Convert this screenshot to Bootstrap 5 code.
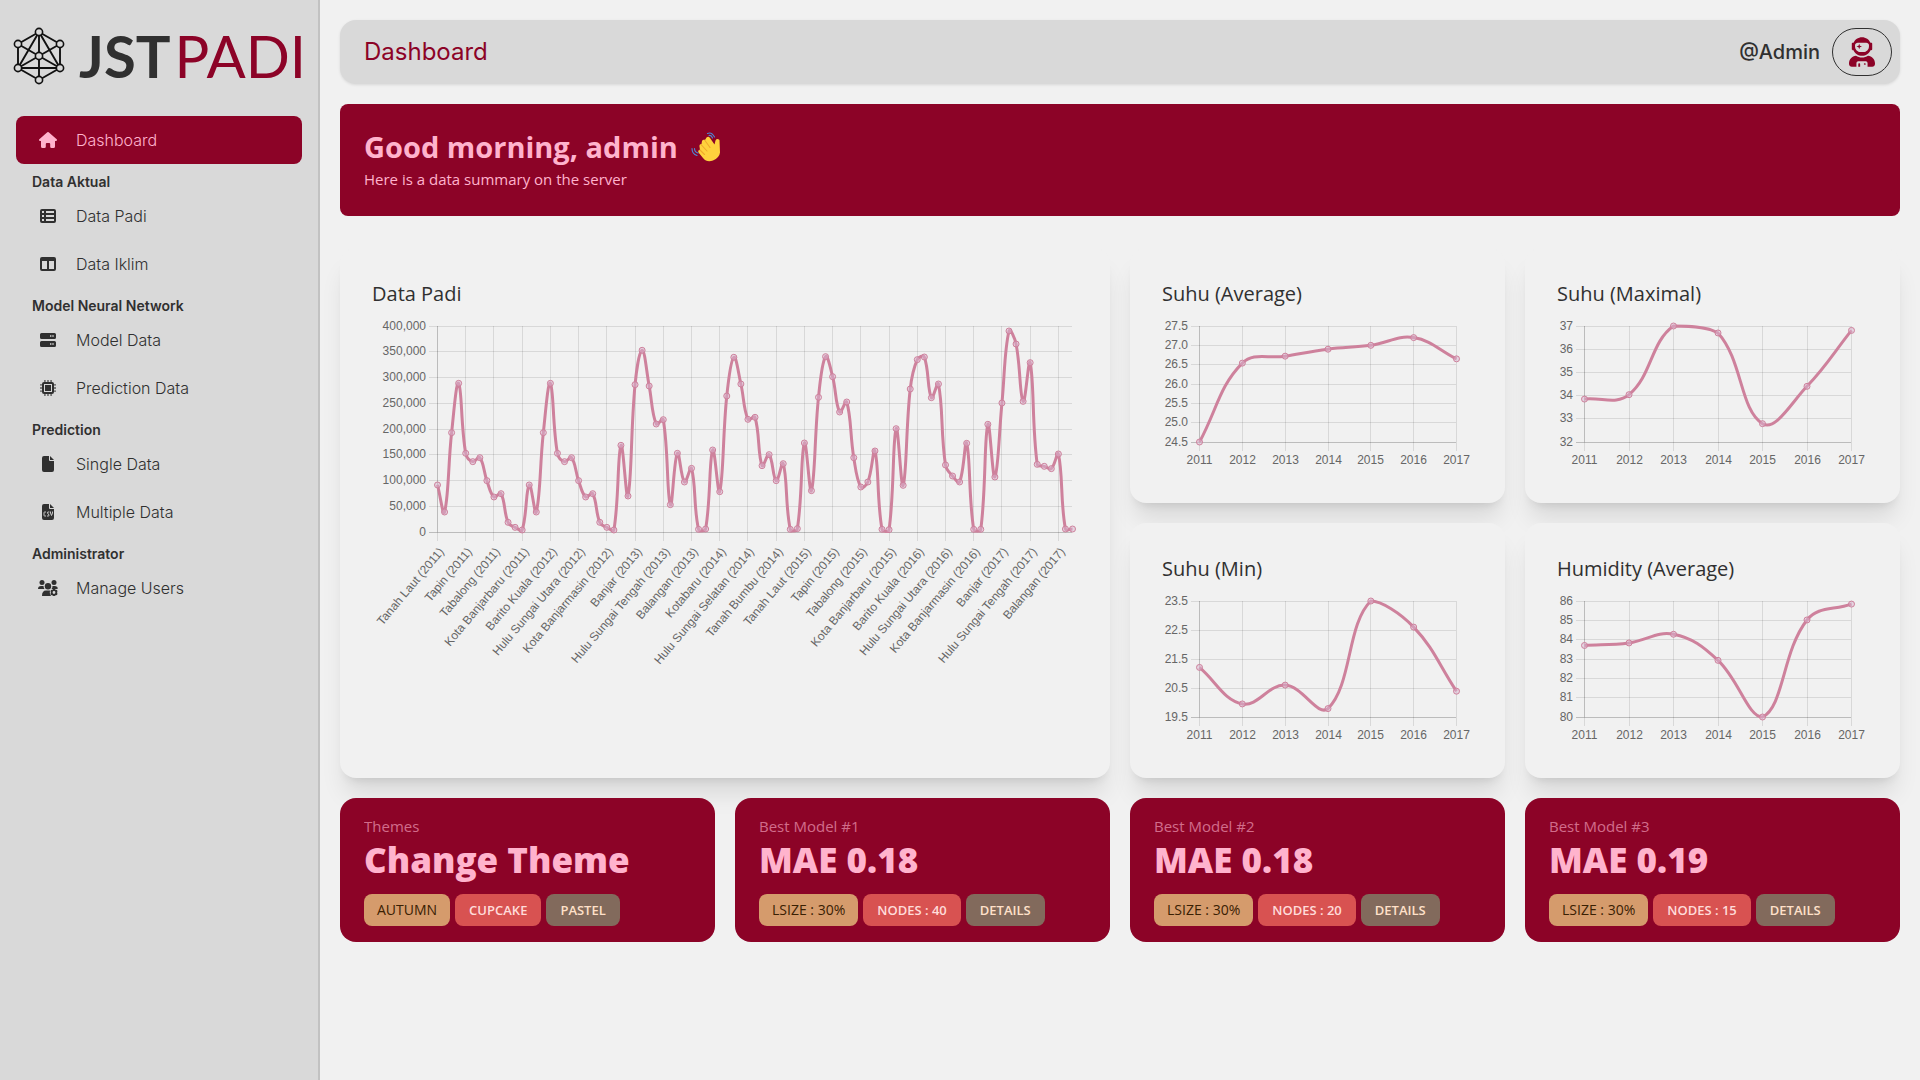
<!DOCTYPE html>
<html lang="id">
<head>
<meta charset="utf-8">
<meta name="viewport" content="width=device-width, initial-scale=1">
<title>JSTPADI - Dashboard</title>
<link href="https://cdn.jsdelivr.net/npm/bootstrap@5.3.0/dist/css/bootstrap.min.css" rel="stylesheet">
<style>
:root{--primary:#8c0327;--primary-text:#ffb3cd;--base:#f1f1f1;--base-2:#d9d9d9;--ink:#303030}
body{background:var(--base);color:var(--ink);font-family:"Open Sans","Noto Sans",sans-serif;font-size:16px;line-height:24px}
.side{width:320px;flex:none;background:var(--base-2);border-right:2px solid #c2c2c2;font-family:Inter,sans-serif}
.brand{padding:20px 12px 0;height:116px;gap:13px;color:#303030;text-decoration:none}
.brand-name{font-family:Lato,sans-serif;font-size:58px;line-height:72px;font-weight:700}
.brand-name span{color:var(--primary);font-weight:400;margin-left:4px}
.side-nav{padding:0 16px}
.side-item{height:48px;padding:0 16px;gap:12px;border-radius:8px;color:var(--ink);font-weight:300;text-decoration:none}
.side-item svg{width:32px;height:16px;fill:currentColor}
.side-item.active{background:var(--primary);color:var(--primary-text)}
.side-head{font-size:14px;line-height:20px;font-weight:600;margin:8px 0 0 16px}
.main{padding:20px;min-width:0}
.topbar{background:var(--base-2);border-radius:16px;padding:8px 8px 8px 24px;box-shadow:0 1px 3px rgba(0,0,0,.1);font-family:Inter,sans-serif}
.topbar h1{font-size:24px;line-height:32px;font-weight:400;color:var(--primary)}
.who{font-size:20px;font-weight:500}
.avatar{width:60px;height:48px;border:1px solid var(--ink);border-radius:24px;background:none;color:var(--primary)}
.hero{background:var(--primary);color:var(--primary-text);border-radius:8px;padding:23px 24px 24px;margin:20px 0 32px;height:112px}
.hero h2{font-size:29px;line-height:40px;font-weight:700;gap:13px}
.hero p{font-size:15px}
.tiles{--bs-gutter-x:20px;--bs-gutter-y:20px}
.panel{background:var(--base);border-radius:16px;padding:32px;box-shadow:0 20px 25px -5px rgba(0,0,0,.1),0 8px 10px -6px rgba(0,0,0,.1)}
.panel h3{font-size:20px;line-height:28px;font-weight:500;margin-bottom:8px}
.chart{display:block;width:100%;overflow:visible;font:12px "Liberation Sans",Arial,sans-serif}
.chart text{fill:#666}
.stat{position:relative;background:var(--primary);color:var(--primary-text);border-radius:16px;padding:16px 24px}
.stat small{display:block;font-size:15px;line-height:24px;opacity:.6}
.stat h3{font-size:35px;line-height:44px;font-weight:800;margin-bottom:12px}
.pills{gap:5px}
.pill{border:0;border-radius:8px;height:32px;padding:0 14px;font-size:13px;line-height:20px;font-weight:600}
.pill-a{background:#d59b6c;color:#3a2003;font-size:14px;font-weight:500;padding:0 13px}
.pill-b{background:#d85251;color:#ffdcda}
.pill-c{background:#826a5c;color:#ffe0c9}
</style>
<script src="https://cdn.jsdelivr.net/npm/bootstrap@5.3.0/dist/js/bootstrap.bundle.min.js"></script>
</head>
<body>
<div class="d-flex min-vh-100">
  <aside class="side">
    <a href="#" class="brand d-flex align-items-start">
      <svg class="flex-shrink-0" width="54" height="72" viewBox="0 0 54 72" fill="#d9d9d9" stroke="#111" stroke-width="1.9">
        <path fill="none" d="M27 12 6 24V48L27 60 48 48V24ZM27 12V60M27 12 6 48H48ZM6 24 48 48M48 24 6 48"/>
        <g stroke-width="1.6"><circle cx="27" cy="12" r="3.6"/><circle cx="6" cy="24" r="3.6"/><circle cx="48" cy="24" r="3.6"/><circle cx="27" cy="36" r="3.6"/><circle cx="6" cy="48" r="3.6"/><circle cx="48" cy="48" r="3.6"/><circle cx="27" cy="60" r="3.6"/></g>
      </svg>
      <div class="brand-name">JST<span>PADI</span></div>
    </a>
    <nav class="side-nav d-flex flex-column">
      <a href="#" class="side-item active d-flex align-items-center"><svg viewBox="0 0 18 16"><path d="M8.300.3Q9-.3 9.700.3L17.700 7.300Q18 7.600 18 8 18 9 17 9H16V14.500Q16 16 14.500 16H12.500Q11.200 16 11.200 14.700V12Q11.200 11 10.200 11H7.800Q6.800 11 6.800 12V14.700Q6.800 16 5.500 16H3.500Q2 16 2 14.500V9H1Q0 9 0 8 0 7.600.3 7.300Z"/></svg>Dashboard</a>
      <div class="side-head">Data Aktual</div>
      <a href="#" class="side-item d-flex align-items-center"><svg viewBox="0 0 16 16"><path fill-rule="evenodd" d="M2 1H14Q16 1 16 3V13Q16 15 14 15H2Q0 15 0 13V3Q0 1 2 1ZM2 3V5H4V3ZM6 3V5H14V3ZM2 7V9H4V7ZM6 7V9H14V7ZM2 11V13H4V11ZM6 11V13H14V11Z"/></svg>Data Padi</a>
      <a href="#" class="side-item d-flex align-items-center"><svg viewBox="0 0 16 16"><path fill-rule="evenodd" d="M2 1H14Q16 1 16 3V13Q16 15 14 15H2Q0 15 0 13V3Q0 1 2 1ZM2 5V13H7V5ZM9 5V13H14V5Z"/></svg>Data Iklim</a>
      <div class="side-head">Model Neural Network</div>
      <a href="#" class="side-item d-flex align-items-center"><svg viewBox="0 0 16 16"><path fill-rule="evenodd" d="M1.500 1H14.500Q16 1 16 2.500V5.500Q16 7 14.500 7H1.500Q0 7 0 5.500V2.500Q0 1 1.500 1ZM10 3.300V4.700H11.400V3.300ZM12.300 3.300V4.700H13.700V3.300ZM1.500 9H14.500Q16 9 16 10.500V13.500Q16 15 14.500 15H1.500Q0 15 0 13.500V10.500Q0 9 1.500 9ZM10 11.300V12.700H11.400V11.300ZM12.300 11.300V12.700H13.700V11.300Z"/></svg>Model Data</a>
      <a href="#" class="side-item d-flex align-items-center"><svg viewBox="0 0 16 16"><path d="M4.200 0H5.600V16H4.200ZM7.300 0H8.700V16H7.300ZM10.400 0H11.800V16H10.400ZM0 4.200V5.600H16V4.200ZM0 7.300V8.700H16V7.300ZM0 10.400V11.800H16V10.400Z" opacity=".75"/><rect x="2" y="2" width="12" height="12" rx="2"/><rect x="4.500" y="4.500" width="7" height="7" fill="none" stroke="#d9d9d9"/></svg>Prediction Data</a>
      <div class="side-head">Prediction</div>
      <a href="#" class="side-item d-flex align-items-center"><svg viewBox="0 0 16 16"><path d="M4 0H9V4Q9 5 10 5H14V14Q14 16 12 16H4Q2 16 2 14V2Q2 0 4 0ZM10 0 14 4H10Z"/></svg>Single Data</a>
      <a href="#" class="side-item d-flex align-items-center"><svg viewBox="0 0 16 16"><path d="M4 0H9V4Q9 5 10 5H14V14Q14 16 12 16H4Q2 16 2 14V2Q2 0 4 0ZM10 0 14 4H10Z"/><path d="M6 8H4.600Q4 8 4 8.600V11.400Q4 12 4.600 12H6M9.400 8H8Q7.300 8 7.500 9L9 11Q9.200 12 8.400 12H7M10.500 7.500V9L11.500 11.500 12.500 9V7.500" fill="none" stroke="#d9d9d9" stroke-width=".9"/></svg>Multiple Data</a>
      <div class="side-head">Administrator</div>
      <a href="#" class="side-item d-flex align-items-center"><svg viewBox="0 0 20 16"><circle cx="4" cy="2.500" r="2.500"/><circle cx="16" cy="2.500" r="2.500"/><circle cx="10" cy="6.200" r="3.200"/><path d="M0 9Q0 6 3 6H5.500Q5.600 7.800 6.500 9ZM13.500 9Q14.500 7.800 14.500 6H17Q19.700 6 20 8.500L18.500 9ZM4 16Q4 10.500 8 10.500H12Q11 13.500 13 16Z"/><circle cx="16" cy="12.500" r="2.300" fill="none" stroke="currentColor" stroke-width="1.800"/><path d="M16 8.800V10M16 15V16.200M12.800 10.600 13.900 11.300M18.100 13.700 19.200 14.400M12.800 14.400 13.900 13.700M18.100 11.300 19.200 10.600" stroke="currentColor" stroke-width="1.800"/></svg>Manage Users</a>
    </nav>
  </aside>

  <main class="main flex-grow-1">
    <header class="topbar d-flex align-items-center justify-content-between">
      <h1 class="m-0">Dashboard</h1>
      <div class="d-flex align-items-center gap-2">
        <span class="who me-1">@Admin</span>
        <button type="button" class="avatar d-flex align-items-center justify-content-center p-0" aria-label="Account">
          <svg width="26" height="30" viewBox="0 0 448 512" fill="currentColor"><path d="M64 224h13.500c24.700 56.500 80.900 96 146.500 96s121.800-39.500 146.500-96H384c8.800 0 16-7.200 16-16v-96c0-8.800-7.200-16-16-16h-13.500C345.800 39.500 289.600 0 224 0S102.200 39.500 77.500 96H64c-8.800 0-16 7.200-16 16v96c0 8.800 7.200 16 16 16zm40-88c0-22.100 21.500-40 48-40h144c26.500 0 48 17.900 48 40v24c0 53-43 96-96 96h-48c-53 0-96-43-96-96v-24zm72 72l12-36 36-12-36-12-12-36-12 36-36 12 36 12 12 36zm151.600 113.400C297.700 340.700 262.200 352 224 352s-73.700-11.300-103.600-30.600C52.900 328.500 0 385 0 454.400v9.600c0 26.500 21.500 48 48 48h80v-64c0-17.700 14.300-32 32-32h128c17.700 0 32 14.300 32 32v64h80c26.500 0 48-21.500 48-48v-9.600c0-69.400-52.900-125.900-120.400-133zM272 448c-8.800 0-16 7.200-16 16s7.200 16 16 16 16-7.200 16-16-7.200-16-16-16zm-96 0c-8.800 0-16 7.200-16 16v48h32v-48c0-8.800-7.200-16-16-16z"/></svg>
        </button>
      </div>
    </header>

    <section class="hero">
      <h2 class="m-0 d-flex align-items-center">Good morning, admin
        <svg width="30" height="30" viewBox="0 0 30 30" aria-label="waving hand" fill="none" stroke-linecap="round">
          <path d="M22 28.500Q16 31 12 26L7.500 20.500Q6.500 18 9 18L8.500 14.500Q8 12 10.500 12L11 9Q12 7 14 8L15.500 5.500Q17.500 4 19 6L23.500 12.500 24.500 8.500Q26 6 28.500 8L29 20.500Q28.500 25.500 22 28.500Z" fill="#ffd23d"/>
          <path d="M9 18 13.500 22.500M10 12.500 16 19M13.800 8.200 19 15.500" stroke="#f0a92c" stroke-width="1.100"/>
          <path d="M16.500 1.500Q20.500-.5 23.500 5M18 3.500Q20.500 3 21.500 6M1 16.500Q1 22 6 23.500M3.500 16.500Q3.500 20 7 21" stroke="#4b8ad8" stroke-width="1.100"/>
        </svg>
      </h2>
      <p class="m-0">Here is a data summary on the server</p>
    </section>

    <div class="row tiles">
      <div class="col-6"><div class="panel h-100"><h3>Data Padi</h3><svg class="chart" id="padi"></svg></div></div>
      <div class="col-6">
        <div class="row tiles">
          <div class="col-6"><div class="panel"><h3>Suhu (Average)</h3><svg class="chart" id="avg"></svg></div></div>
          <div class="col-6"><div class="panel"><h3>Suhu (Maximal)</h3><svg class="chart" id="max"></svg></div></div>
          <div class="col-6"><div class="panel"><h3>Suhu (Min)</h3><svg class="chart" id="min"></svg></div></div>
          <div class="col-6"><div class="panel"><h3>Humidity (Average)</h3><svg class="chart" id="hum"></svg></div></div>
        </div>
      </div>
      <div class="col-3"><div class="stat"><small>Themes</small><h3>Change Theme</h3><div class="d-flex pills"><button type="button" class="pill pill-a">AUTUMN</button><button type="button" class="pill pill-b">CUPCAKE</button><button type="button" class="pill pill-c">PASTEL</button></div></div></div>
      <div class="col-3"><div class="stat"><small>Best Model #1</small><h3>MAE 0.18</h3><div class="d-flex pills"><button type="button" class="pill pill-a">LSIZE : 30%</button><button type="button" class="pill pill-b">NODES : 40</button><button type="button" class="pill pill-c">DETAILS</button></div></div></div>
      <div class="col-3"><div class="stat"><small>Best Model #2</small><h3>MAE 0.18</h3><div class="d-flex pills"><button type="button" class="pill pill-a">LSIZE : 30%</button><button type="button" class="pill pill-b">NODES : 20</button><button type="button" class="pill pill-c">DETAILS</button></div></div></div>
      <div class="col-3"><div class="stat"><small>Best Model #3</small><h3>MAE 0.19</h3><div class="d-flex pills"><button type="button" class="pill pill-a">LSIZE : 30%</button><button type="button" class="pill pill-b">NODES : 15</button><button type="button" class="pill pill-c">DETAILS</button></div></div></div>
    </div>
  </main>
</div>

<script>
const years = [2011, 2012, 2013, 2014, 2015, 2016, 2017];
const regions = ['Tanah Laut', 'Kotabaru', 'Banjar', 'Barito Kuala', 'Tapin', 'Hulu Sungai Selatan', 'Hulu Sungai Tengah', 'Hulu Sungai Utara', 'Tabalong', 'Tanah Bumbu', 'Balangan', 'Kota Banjarmasin', 'Kota Banjarbaru'];
// Harvest per region, in thousands of tons, one row per year
const padi = [
  91.3,38.8,192.9,288.7,152.8,136.6,144.3,99.7,68,74.4,18.8,9,3.9,
  91.3,38.8,192.9,288.7,152.8,136.6,144.3,99.7,68,74.4,18.8,9,3.9,
  168.3,69.9,286.1,352.8,283.5,209.7,218.1,53.1,152.8,97.1,123.6,5.2,5.8,
  159.2,78.3,264.1,339.2,287.4,218.8,222.7,128.8,150.2,99.7,132.7,5.2,6.5,
  172.8,80.3,261.5,340.5,301.6,233,252.4,144.3,87.4,97.1,157.3,5.2,4.5,
  200.6,90.6,277.7,334.6,339.8,260.8,287.4,130.1,108.7,97.1,172.2,5.2,5.2,
  209.1,106.8,250.5,390.3,365,253.7,328.8,131.4,127.5,123,151.5,5.8,5.8
];
const charts = [
  {id:'padi', labels:years.flatMap(y => regions.map(r => r + ' (' + y + ')')), data:padi.map(v => v * 1000), lo:0, hi:400000, step:50000, fmt:v => v.toLocaleString('en-US'), left:65, right:6, bottom:137, every:4, rotate:true},
  {id:'avg', labels:years, data:[24.5,26.54,26.72,26.9,27,27.2,26.65], lo:24.5, hi:27.5, step:.5, fmt:v => v.toFixed(1), left:37, right:17, bottom:29, every:1},
  {id:'max', labels:years, data:[33.85,34.04,37,36.7,32.79,34.4,36.81], lo:32, hi:37, step:1, fmt:v => v, left:27, right:17, bottom:29, every:1},
  {id:'min', labels:years, data:[21.21,19.95,20.6,19.79,23.5,22.6,20.39], lo:19.5, hi:23.5, step:1, fmt:v => v.toFixed(1), left:37, right:17, bottom:29, every:1},
  {id:'hum', labels:years, data:[83.7,83.83,84.28,82.93,80,85.02,85.84], lo:80, hi:86, step:1, fmt:v => v, left:27, right:17, bottom:29, every:1}
];
function draw(c) {
  const svg = document.getElementById(c.id), w = svg.parentNode.clientWidth - 64, h = Math.floor(w / 2);
  svg.setAttribute('height', h);
  const x0 = c.left, x1 = w - c.right, y0 = 10, y1 = h - c.bottom, snap = v => Math.floor(v) + .5;
  const X = i => x0 + .5 + i * (x1 - x0) / (c.data.length - 1), Y = v => y1 - (v - c.lo) / (c.hi - c.lo) * (y1 - y0);
  const line = (a, b, d, e, o) => `<path d="M${a} ${b}L${d} ${e}" stroke="#000" stroke-opacity="${o}"/>`;
  let s = '';
  for (let v = c.lo; v <= c.hi + 1e-6; v += c.step) {
    const y = snap(Y(v));
    s += line(x0 - 8, y, x1, y, v === c.lo ? .22 : .1) + `<text x="${x0 - 11}" y="${y + 3}" text-anchor="end">${c.fmt(v)}</text>`;
  }
  for (let i = 0; i < c.labels.length; i += c.every) {
    const x = snap(X(i));
    s += line(x, y0, x, y1, i ? .1 : .22) + line(x, y1, x, y1 + 9, .1);
    s += c.rotate ? `<text transform="translate(${x + 7} ${y1 + 20}) rotate(-50)" text-anchor="end">${c.labels[i]}</text>`
                  : `<text x="${x}" y="${y1 + 22}" text-anchor="middle">${c.labels[i]}</text>`;
  }
  // Smooth curve: control points weighted by the distance to each neighbour
  const p = c.data.map((v, i) => [X(i), Y(v)]), clamp = v => Math.min(y1 + .5, Math.max(y0, v));
  const ctl = p.map((q, i) => {
    const a = p[i - 1] || q, b = p[i + 1] || q;
    const d1 = Math.hypot(q[0] - a[0], q[1] - a[1]), d2 = Math.hypot(b[0] - q[0], b[1] - q[1]);
    const f1 = .4 * d1 / (d1 + d2), f2 = .4 * d2 / (d1 + d2), dx = b[0] - a[0], dy = b[1] - a[1];
    return [q[0] - f1 * dx, clamp(q[1] - f1 * dy), q[0] + f2 * dx, clamp(q[1] + f2 * dy)];
  });
  let d = 'M' + p[0];
  for (let i = 1; i < p.length; i++) d += `C${ctl[i-1][2]},${ctl[i-1][3]} ${ctl[i][0]},${ctl[i][1]} ${p[i]}`;
  s += `<path d="${d}" fill="none" stroke="#ce819c" stroke-width="3"/>`;
  for (const q of p) s += `<circle cx="${q[0]}" cy="${q[1]}" r="3" fill="#d9b6d0" fill-opacity=".5" stroke="#ce819c"/>`;
  svg.innerHTML = s;
}
const drawAll = () => charts.forEach(draw);
drawAll();
addEventListener('resize', drawAll);
</script>
</body>
</html>
